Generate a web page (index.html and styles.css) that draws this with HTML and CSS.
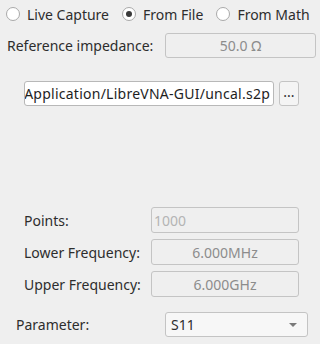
FILE: index.html
```html
<!DOCTYPE html>
<html lang="en">
<head>
    <meta charset="UTF-8">
    <title>Trace Source</title>
    <link rel="stylesheet" href="styles.css">
</head>
<body>
    <div class="source-row">
        <label class="radio"><span class="dot"></span>Live Capture</label>
        <label class="radio checked"><span class="dot"></span>From File</label>
        <label class="radio"><span class="dot"></span>From Math</label>
    </div>
    <div class="imp-row">
        <span class="label">Reference impedance:</span>
        <div class="field disabled center">50.0 Ω</div>
    </div>
    <div class="file-row">
        <div class="field file"><span>Application/LibreVNA-GUI/uncal.s2p</span></div>
        <div class="browse">...</div>
    </div>
    <div class="form">
        <div class="form-row">
            <span class="label">Points:</span>
            <div class="field disabled left">1000</div>
        </div>
        <div class="form-row">
            <span class="label">Lower Frequency:</span>
            <div class="field disabled center">6.000MHz</div>
        </div>
        <div class="form-row">
            <span class="label">Upper Frequency:</span>
            <div class="field disabled center">6.000GHz</div>
        </div>
    </div>
    <div class="param-row">
        <span class="label">Parameter:</span>
        <div class="combo">S11<span class="arrow"></span></div>
    </div>
</body>
</html>
```

FILE: styles.css
```css
body {
    margin: 0;
    width: 320px;
    height: 344px;
    background: #efefef;
    font-family: "Noto Sans", "Open Sans", sans-serif;
    font-size: 14px;
    color: #2d2d2d;
    overflow: hidden;
}
.source-row {
    display: flex;
    align-items: center;
    height: 28px;
    padding-left: 6px;
}
.radio {
    display: flex;
    align-items: center;
    margin-right: 13px;
    white-space: nowrap;
}
.radio:last-child {
    margin-right: 0;
}
.radio .dot {
    width: 12px;
    height: 12px;
    border: 1px solid #a9a9a9;
    border-radius: 50%;
    background: #ffffff;
    margin-right: 7px;
    position: relative;
}
.radio.checked .dot::after {
    content: "";
    position: absolute;
    left: 3px;
    top: 3px;
    width: 6px;
    height: 6px;
    border-radius: 50%;
    background: #3a3a3a;
}
.field {
    box-sizing: border-box;
    flex: none;
    height: 25px;
    border: 1px solid #c4c4c4;
    border-radius: 3px;
    display: flex;
    align-items: center;
    padding: 0 4px;
}
.field.disabled {
    color: #8c8c8c;
}
.field.center {
    justify-content: center;
}
.field.left {
    color: #b4b4b4;
    padding-left: 2px;
}
.imp-row {
    display: flex;
    align-items: center;
    padding-left: 7px;
    margin-top: 5px;
}
.imp-row .label {
    width: 158px;
}
.imp-row .field {
    width: 151px;
}
.file-row {
    display: flex;
    margin: 23px 0 0 24px;
}
.field.file {
    width: 250px;
    background: #ffffff;
    border-color: #b8b8b8;
    padding: 0;
    overflow: hidden;
    justify-content: flex-end;
    color: #1e1e1e;
    font-size: 14px;
    letter-spacing: 0.25px;
}
.field.file span {
    white-space: nowrap;
    padding-right: 3px;
}
.browse {
    box-sizing: border-box;
    width: 20px;
    height: 25px;
    margin-left: 5px;
    border: 1px solid #c4c4c4;
    border-radius: 3px;
    background: #f4f4f4;
    text-align: center;
    line-height: 20px;
}
.form {
    display: flex;
    flex-direction: column;
    gap: 6px;
    margin: 101px 0 0 24px;
}
.form-row {
    display: flex;
    align-items: center;
}
.form-row .label {
    width: 127px;
}
.form-row .field {
    width: 148px;
    height: 26px;
}
.param-row {
    display: flex;
    align-items: center;
    margin-top: 15px;
    padding-left: 16px;
}
.param-row .label {
    width: 149px;
}
.combo {
    box-sizing: border-box;
    width: 143px;
    height: 25px;
    border: 1px solid #c4c4c4;
    border-radius: 3px;
    background: #f7f7f7;
    display: flex;
    align-items: center;
    justify-content: space-between;
    padding: 0 10px 0 5px;
}
.arrow {
    width: 0;
    height: 0;
    border-left: 4px solid transparent;
    border-right: 4px solid transparent;
    border-top: 4px solid #7a7a7a;
}
```
